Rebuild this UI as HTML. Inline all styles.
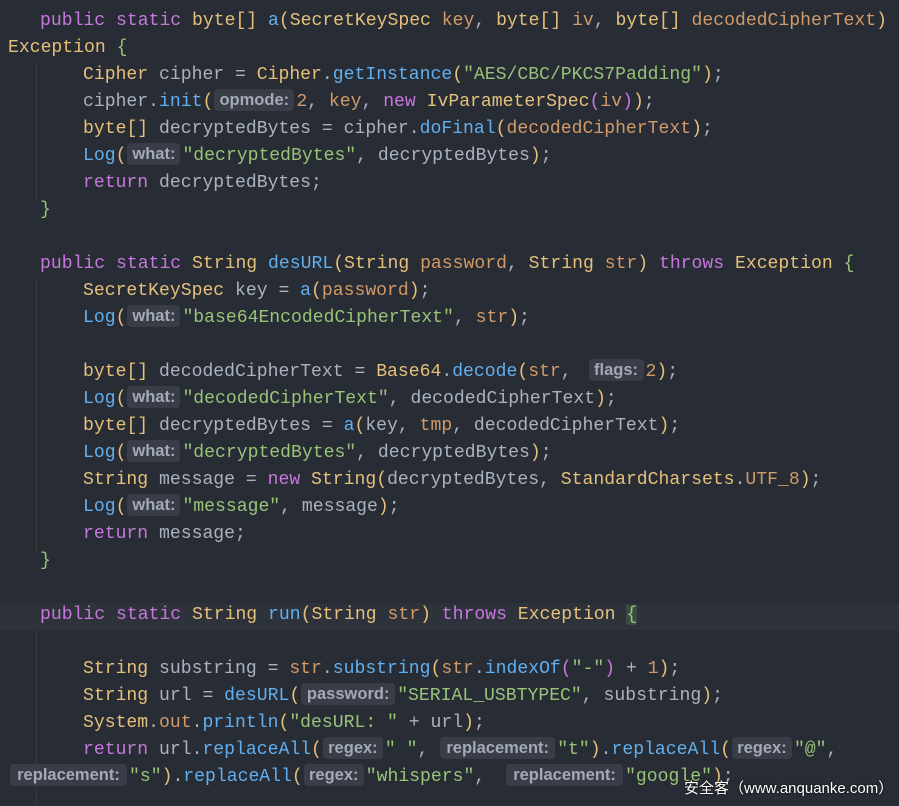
<!DOCTYPE html>
<html><head><meta charset="utf-8"><style>
html,body{margin:0;padding:0;background:#282c34;width:899px;height:806px;overflow:hidden;position:relative}
.l{position:absolute;white-space:pre;font-family:"Liberation Mono",monospace;font-size:18.1px;line-height:27px;height:27px;color:#abb2bf}
.k{color:#c678dd}.t{color:#e5c07b}.f{color:#61afef}.s{color:#98c379}.p{color:#d19a66}.g{color:#98c379}.y{color:#e5c07b}
.h{display:inline-block;background:#393d47;color:#a3aab6;font:bold 16.5px/22px "Liberation Sans",sans-serif;border-radius:4px;text-align:center;vertical-align:1px;margin:0 2px 0 1px}
.guide{position:absolute;left:36px;width:1px;background:#34402f}
.cur{position:absolute;left:0;top:603px;width:899px;height:27px;background:#2e323b}
.wm{position:absolute;left:684px;top:777px;font:15px "Liberation Sans","Noto Sans CJK SC",sans-serif;color:#fff;text-shadow:0 0 2px #000}
</style></head><body>
<div class="cur"></div>
<div class="guide" style="top:62px;height:140px"></div>
<div class="guide" style="top:280px;height:272px"></div>
<div class="guide" style="top:630px;height:176px"></div>

<div class="l" style="left:40px;top:8px"><span class="k">public static </span><span class="t">byte</span><span class="y">[]</span> <span class="f">a</span><span class="y">(</span><span class="t">SecretKeySpec</span> <span class="p">key</span>, <span class="t">byte</span><span class="y">[]</span> <span class="p">iv</span>, <span class="t">byte</span><span class="y">[]</span> <span class="p">decodedCipherText</span><span class="y">)</span></div>
<div class="l" style="left:8px;top:35px"><span class="t">Exception</span> <span class="g">{</span></div>
<div class="l" style="left:83px;top:62px"><span class="t">Cipher</span> cipher = <span class="t">Cipher</span>.<span class="f">getInstance</span><span class="y">(</span><span class="s">"AES/CBC/PKCS7Padding"</span><span class="y">)</span>;</div>
<div class="l" style="left:83px;top:89px">cipher.<span class="f">init</span><span class="y">(</span><span class="h" style="width:80px">opmode:</span><span class="p">2</span>, <span class="p">key</span>, <span class="k">new</span> <span class="t">IvParameterSpec</span><span class="k">(</span><span class="p">iv</span><span class="k">)</span><span class="y">)</span>;</div>
<div class="l" style="left:83px;top:116px"><span class="t">byte</span><span class="y">[]</span> decryptedBytes = cipher.<span class="f">doFinal</span><span class="y">(</span><span class="p">decodedCipherText</span><span class="y">)</span>;</div>
<div class="l" style="left:83px;top:143px"><span class="f">Log</span><span class="y">(</span><span class="h" style="width:53px">what:</span><span class="s">"decryptedBytes"</span>, decryptedBytes<span class="y">)</span>;</div>
<div class="l" style="left:83px;top:170px"><span class="k">return</span> decryptedBytes;</div>
<div class="l" style="left:40px;top:197px"><span class="g">}</span></div>

<div class="l" style="left:40px;top:251px"><span class="k">public static </span><span class="t">String</span> <span class="f">desURL</span><span class="y">(</span><span class="t">String</span> <span class="p">password</span>, <span class="t">String</span> <span class="p">str</span><span class="y">)</span> <span class="k">throws</span> <span class="t">Exception</span> <span class="g">{</span></div>
<div class="l" style="left:83px;top:278px"><span class="t">SecretKeySpec</span> key = <span class="f">a</span><span class="y">(</span><span class="p">password</span><span class="y">)</span>;</div>
<div class="l" style="left:83px;top:305px"><span class="f">Log</span><span class="y">(</span><span class="h" style="width:53px">what:</span><span class="s">"base64EncodedCipherText"</span>, <span class="p">str</span><span class="y">)</span>;</div>
<div class="l" style="left:83px;top:359px"><span class="t">byte</span><span class="y">[]</span> decodedCipherText = <span class="t">Base64</span>.<span class="f">decode</span><span class="y">(</span><span class="p">str</span>, <span class="h" style="width:55px;margin-left:6px">flags:</span><span class="p">2</span><span class="y">)</span>;</div>
<div class="l" style="left:83px;top:386px"><span class="f">Log</span><span class="y">(</span><span class="h" style="width:53px">what:</span><span class="s">"decodedCipherText"</span>, decodedCipherText<span class="y">)</span>;</div>
<div class="l" style="left:83px;top:413px"><span class="t">byte</span><span class="y">[]</span> decryptedBytes = <span class="f">a</span><span class="y">(</span>key, <span class="p">tmp</span>, decodedCipherText<span class="y">)</span>;</div>
<div class="l" style="left:83px;top:440px"><span class="f">Log</span><span class="y">(</span><span class="h" style="width:53px">what:</span><span class="s">"decryptedBytes"</span>, decryptedBytes<span class="y">)</span>;</div>
<div class="l" style="left:83px;top:467px"><span class="t">String</span> message = <span class="k">new</span> <span class="t">String</span><span class="y">(</span>decryptedBytes, <span class="t">StandardCharsets</span>.<span class="p">UTF_8</span><span class="y">)</span>;</div>
<div class="l" style="left:83px;top:494px"><span class="f">Log</span><span class="y">(</span><span class="h" style="width:53px">what:</span><span class="s">"message"</span>, message<span class="y">)</span>;</div>
<div class="l" style="left:83px;top:521px"><span class="k">return</span> message;</div>
<div class="l" style="left:40px;top:548px"><span class="g">}</span></div>

<div class="l" style="left:40px;top:602px"><span class="k">public static </span><span class="t">String</span> <span class="f">run</span><span class="y">(</span><span class="t">String</span> <span class="p">str</span><span class="y">)</span> <span class="k">throws</span> <span class="t">Exception</span> <span class="g" style="background:#3a4a40">{</span></div>
<div class="l" style="left:83px;top:656px"><span class="t">String</span> substring = <span class="p">str</span>.<span class="f">substring</span><span class="y">(</span><span class="p">str</span>.<span class="f">indexOf</span><span class="k">(</span><span class="s">"-"</span><span class="k">)</span> + <span class="p">1</span><span class="y">)</span>;</div>
<div class="l" style="left:83px;top:683px"><span class="t">String</span> url = <span class="f">desURL</span><span class="y">(</span><span class="h" style="width:94px">password:</span><span class="s">"SERIAL_USBTYPEC"</span>, substring<span class="y">)</span>;</div>
<div class="l" style="left:83px;top:710px"><span class="t">System</span>.<span class="p">out</span>.<span class="f">println</span><span class="y">(</span><span class="s">"desURL: "</span> + url<span class="y">)</span>;</div>
<div class="l" style="left:83px;top:737px"><span class="k">return</span> url.<span class="f">replaceAll</span><span class="y">(</span><span class="h" style="width:60px">regex:</span><span class="s">" "</span>, <span class="h" style="width:115px">replacement:</span><span class="s">"t"</span><span class="y">)</span>.<span class="f">replaceAll</span><span class="y">(</span><span class="h" style="width:60px">regex:</span><span class="s">"@"</span>,</div>
<div class="l" style="left:9px;top:764px"><span class="h" style="width:117px">replacement:</span><span class="s">"s"</span><span class="y">)</span>.<span class="f">replaceAll</span><span class="y">(</span><span class="h" style="width:60px">regex:</span><span class="s">"whispers"</span>, <span class="h" style="width:117px;margin-left:10px">replacement:</span><span class="s">"google"</span><span class="y">)</span>;</div>

<div class="wm">安全客（www.anquanke.com）</div>
</body></html>
